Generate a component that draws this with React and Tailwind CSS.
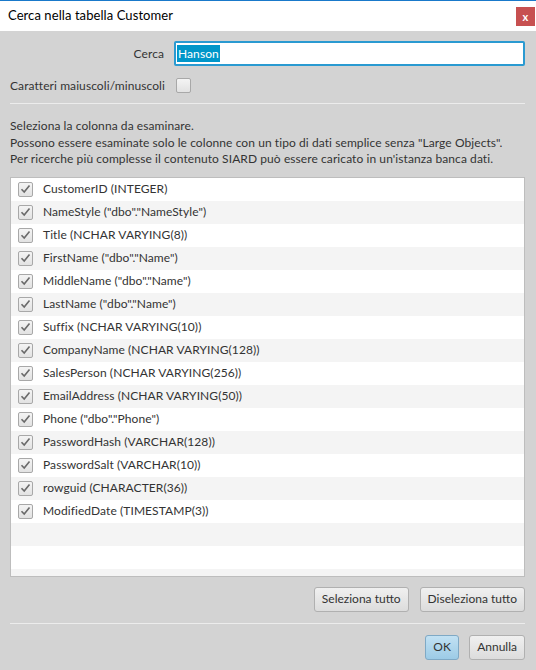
import React from 'react';

const columns = [
  'CustomerID (INTEGER)',
  'NameStyle ("dbo"."NameStyle")',
  'Title (NCHAR VARYING(8))',
  'FirstName ("dbo"."Name")',
  'MiddleName ("dbo"."Name")',
  'LastName ("dbo"."Name")',
  'Suffix (NCHAR VARYING(10))',
  'CompanyName (NCHAR VARYING(128))',
  'SalesPerson (NCHAR VARYING(256))',
  'EmailAddress (NCHAR VARYING(50))',
  'Phone ("dbo"."Phone")',
  'PasswordHash (VARCHAR(128))',
  'PasswordSalt (VARCHAR(10))',
  'rowguid (CHARACTER(36))',
  'ModifiedDate (TIMESTAMP(3))',
];

function CheckBox({ checked }) {
  return (
    <div className="w-[15px] h-[15px] shrink-0 rounded-[2px] border border-[#a8a8a8] bg-gradient-to-b from-[#f4f4f4] to-[#e2e2e2] flex items-center justify-center">
      {checked && (
        <svg width="11" height="10" viewBox="0 0 11 10">
          <path d="M1.5 5.2 L4.2 8 L9.5 1.5" fill="none" stroke="#6a6a6a" strokeWidth="1.6" />
        </svg>
      )}
    </div>
  );
}

function Btn({ children, primary }) {
  return (
    <button
      className={
        primary
          ? 'h-[25px] w-[34px] rounded-[3px] border border-[#7fa9c5] bg-gradient-to-b from-[#c2e1f3] to-[#9ccbe6] text-[12px] text-[#333]'
          : 'h-[25px] px-[7px] rounded-[3px] border border-[#b0b0b0] bg-gradient-to-b from-[#f0f0f0] to-[#dcdcdc] text-[12px] text-[#333] tracking-normal'
      }
    >
      {children}
    </button>
  );
}

export default function App() {
  const rows = [...columns.map((c) => ({ label: c })), {}, {}, {}];
  return (
    <div className="w-[536px] h-[670px] bg-[#d3d3d3] flex flex-col text-[#333] font-['Segoe_UI','Lato',sans-serif] text-[12px] tracking-[0.08px] overflow-hidden">
      {/* title bar */}
      <div className="h-[31px] bg-white border-t border-[#1979ca] flex items-center justify-between pl-[8px] pr-[1px]">
        <span className="text-[13px] text-black">Cerca nella tabella Customer</span>
        <div className="w-[19px] h-[19px] bg-[#c75050] flex items-center justify-center text-white text-[11px] font-bold leading-none">x</div>
      </div>

      <div className="flex flex-col px-[10px] pr-[11px]">
        <div className="flex items-center mt-[10px] h-[25px]">
          <span className="w-[154px] text-right">Cerca</span>
          <div className="ml-[10px] flex-1 h-[25px] bg-white border-2 border-[#2a9ad1] rounded-[2px] flex items-center pl-[1px]">
            <span className="bg-[#0096c9] text-white px-[1px] leading-[17px]">Hanson</span>
          </div>
        </div>

        <div className="flex items-center mt-[11px] h-[17px]">
          <span>Caratteri maiuscoli/minuscoli</span>
          <div className="ml-[11px] w-[15px] h-[15px] rounded-[2px] border border-[#a8a8a8] bg-gradient-to-b from-[#f4f4f4] to-[#e2e2e2]" />
        </div>

        <div className="mt-[9px] h-px bg-[#ececec]" />

        <div className="mt-[14px] leading-[16.5px]">
          <p>Seleziona la colonna da esaminare.</p>
          <p>Possono essere esaminate solo le colonne con un tipo di dati semplice senza "Large Objects".</p>
          <p>Per ricerche più complesse il contenuto SIARD può essere caricato in un'istanza banca dati.</p>
        </div>

        <div className="mt-[9px] h-[400px] bg-white border border-[#bdbdbd] overflow-hidden">
          {rows.map((r, i) => (
            <div key={i} className={`h-[23px] flex items-center pl-[7px] ${i % 2 ? 'bg-[#f4f4f4]' : 'bg-white'}`}>
              {r.label && (
                <>
                  <CheckBox checked />
                  <span className="ml-[10px]">{r.label}</span>
                </>
              )}
            </div>
          ))}
        </div>

        <div className="flex justify-end gap-[11px] mt-[10px]">
          <Btn>Seleziona tutto</Btn>
          <Btn>Diseleziona tutto</Btn>
        </div>

        <div className="mt-[11px] h-px bg-[#ececec]" />

        <div className="flex justify-end gap-[10px] mt-[11px]">
          <Btn primary>OK</Btn>
          <Btn>Annulla</Btn>
        </div>
      </div>
    </div>
  );
}
